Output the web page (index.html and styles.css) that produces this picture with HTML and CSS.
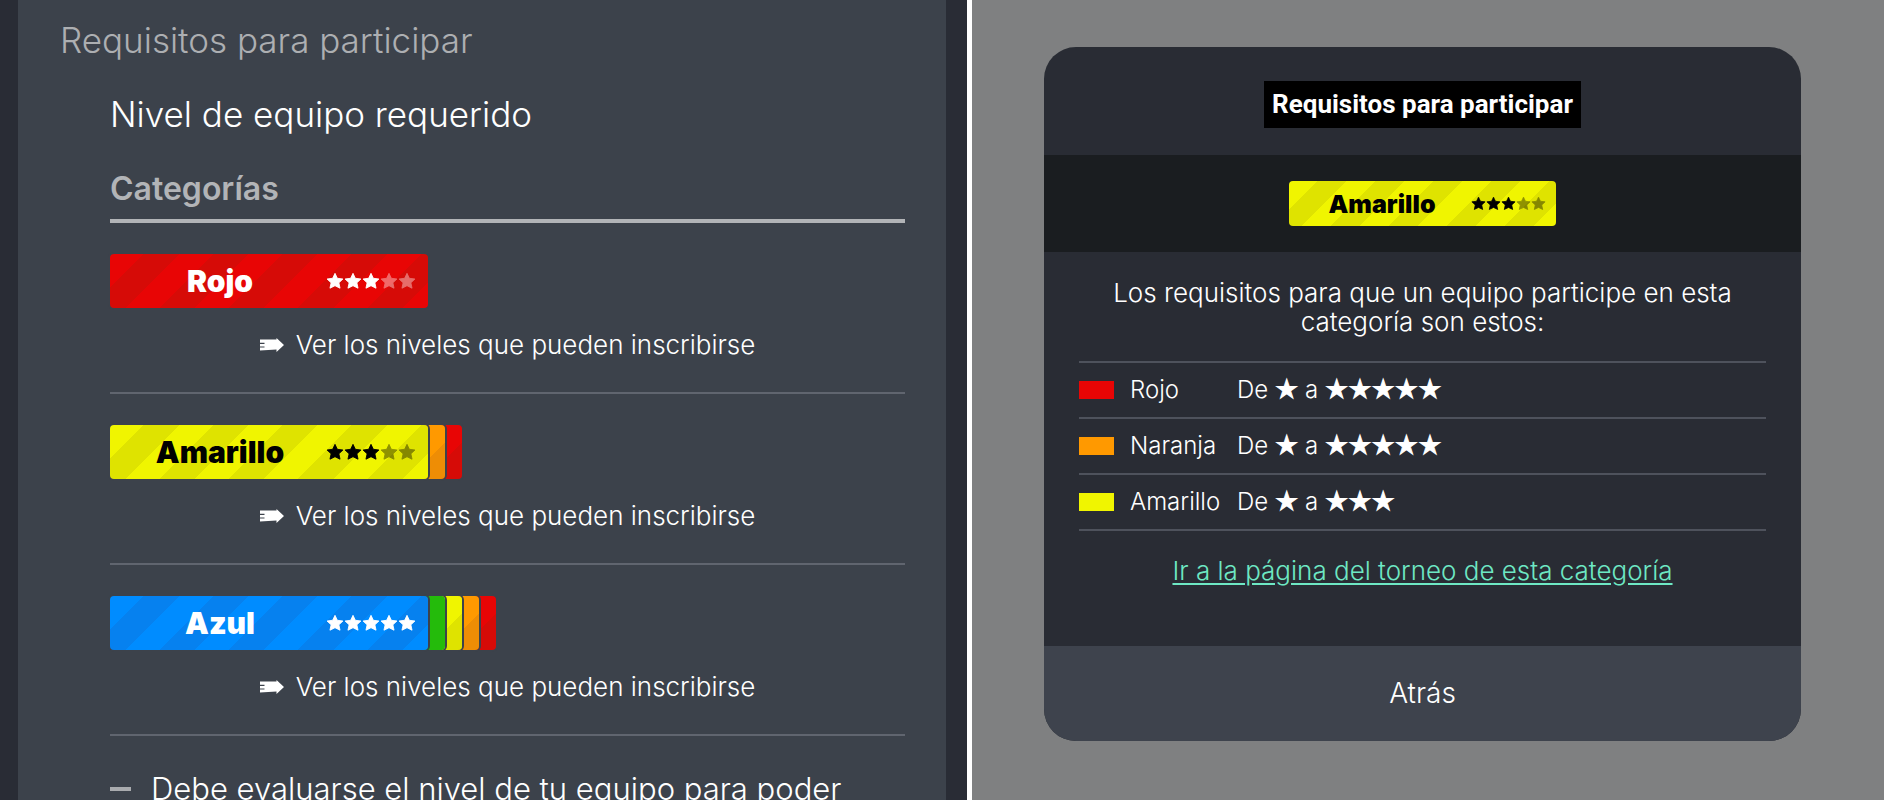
FILE: index.html
```html
<!DOCTYPE html>
<html lang="es">

<head>
    <meta charset="UTF-8">
    <meta name="viewport" content="width=device-width, initial-scale=1.0">
    <title>Requisitos para participar</title>
    <link rel="stylesheet" href="styles.css">
</head>

<body>
    <!-- shared icons -->
    <svg class="defs" aria-hidden="true">
        <symbol id="star" viewBox="0 0 20 20">
            <path d="M10 1.5 L12.6 7 L18.8 7.8 L14.3 12 L15.6 18 L10 15.2 L4.4 18 L5.7 12 L1.2 7.8 L7.4 7 Z" fill="currentColor" stroke="currentColor" stroke-linejoin="round" />
        </symbol>
        <symbol id="arrow" viewBox="0 0 24 14">
            <path d="M0 1.5 L16.5 1.5 L16.5 0 L24 7 L16.5 14 L16.5 11.5 L0 12.5 L0 9.6 L4.5 9.6 L4.5 8.4 L0 8.4 L0 6 L4.5 6 L4.5 4.8 L0 4.8 Z" fill="currentColor" />
        </symbol>
    </svg>

    <div class="page">
        <main class="screen">
            <section class="panel">
                <h1>Requisitos para participar</h1>
                <div class="content">
                    <h2>Nivel de equipo requerido</h2>
                    <h3>Categorías</h3>
                    <ul class="categories">
                        <li>
                            <div class="stack">
                                <div class="badge red">
                                    <span class="name">Rojo</span>
                                    <span class="stars"><svg><use href="#star" /></svg><svg><use href="#star" /></svg><svg><use href="#star" /></svg><svg class="off"><use href="#star" /></svg><svg class="off"><use href="#star" /></svg></span>
                                </div>
                            </div>
                            <a class="more" href="#rojo"><svg><use href="#arrow" /></svg>Ver los niveles que pueden inscribirse</a>
                        </li>
                        <li>
                            <div class="stack">
                                <div class="badge yellow">
                                    <span class="name">Amarillo</span>
                                    <span class="stars"><svg><use href="#star" /></svg><svg><use href="#star" /></svg><svg><use href="#star" /></svg><svg class="off"><use href="#star" /></svg><svg class="off"><use href="#star" /></svg></span>
                                </div>
                                <span class="tab orange"></span>
                                <span class="tab red"></span>
                            </div>
                            <a class="more" href="#amarillo"><svg><use href="#arrow" /></svg>Ver los niveles que pueden inscribirse</a>
                        </li>
                        <li>
                            <div class="stack">
                                <div class="badge blue">
                                    <span class="name">Azul</span>
                                    <span class="stars"><svg><use href="#star" /></svg><svg><use href="#star" /></svg><svg><use href="#star" /></svg><svg><use href="#star" /></svg><svg><use href="#star" /></svg></span>
                                </div>
                                <span class="tab green"></span>
                                <span class="tab yellow"></span>
                                <span class="tab orange"></span>
                                <span class="tab red"></span>
                            </div>
                            <a class="more" href="#azul"><svg><use href="#arrow" /></svg>Ver los niveles que pueden inscribirse</a>
                        </li>
                    </ul>
                    <p class="note">Debe evaluarse el nivel de tu equipo para poder</p>
                </div>
            </section>
        </main>

        <aside class="overlay">
            <div class="modal" role="dialog" aria-labelledby="modal-title">
                <header>
                    <h2 id="modal-title">Requisitos para participar</h2>
                </header>
                <div class="current">
                    <div class="badge small yellow">
                        <span class="name">Amarillo</span>
                        <span class="stars"><svg><use href="#star" /></svg><svg><use href="#star" /></svg><svg><use href="#star" /></svg><svg class="off"><use href="#star" /></svg><svg class="off"><use href="#star" /></svg></span>
                    </div>
                </div>
                <div class="body">
                    <p>Los requisitos para que un equipo participe en esta categoría son estos:</p>
                    <table>
                        <tr>
                            <td class="color"><span class="swatch red"></span></td>
                            <td class="label">Rojo</td>
                            <td>De <b>★</b> a <b>★★★★★</b></td>
                        </tr>
                        <tr>
                            <td class="color"><span class="swatch orange"></span></td>
                            <td class="label">Naranja</td>
                            <td>De <b>★</b> a <b>★★★★★</b></td>
                        </tr>
                        <tr>
                            <td class="color"><span class="swatch yellow"></span></td>
                            <td class="label">Amarillo</td>
                            <td>De <b>★</b> a <b>★★★</b></td>
                        </tr>
                    </table>
                    <a class="link" href="#torneo">Ir a la página del torneo de esta categoría</a>
                </div>
                <button class="back" type="button">Atrás</button>
            </div>
        </aside>
    </div>
</body>

</html>
```
FILE: styles.css
```css
* {
    margin: 0;
    padding: 0;
    box-sizing: border-box;
}

body {
    height: 100vh;
    overflow: hidden;
    background: #ffffff;
    color: #ffffff;
    font-family: Inter, "Noto Sans", sans-serif;
    font-weight: 300;
}

.defs {
    display: none;
}

.page {
    display: grid;
    grid-template-columns: 967fr 912fr;
    gap: 5px;
    height: 100vh;
}

/* left screen */
.screen {
    background: #292c35;
    padding: 0 21px 0 18px;
    overflow: hidden;
}

.panel {
    background: #3c424b;
    min-height: 100%;
    padding: 18px 41px 0 42px;
}

.panel h1,
.panel h2 {
    font-size: 35px;
    line-height: 44px;
    font-weight: 300;
}

.panel h1 {
    color: #adafb2;
}

.content {
    padding: 30px 0 0 50px;
}

.panel h3 {
    font-size: 32px;
    line-height: 40px;
    font-weight: 600;
    color: #b2b4b7;
    margin-top: 33px;
    padding-bottom: 10px;
    border-bottom: 4px solid #b2b4b7;
}

.categories {
    list-style: none;
}

.categories li {
    padding: 31px 0;
    border-bottom: 2px solid #60656f;
}

.stack {
    display: flex;
}

/* level colours */
.red {
    --base: #e80505;
    --stripe: #d60b07;
    --ink: #ffffff;
}

.orange {
    --base: #ff9900;
    --stripe: #ee8d05;
}

.yellow {
    --base: #f0f500;
    --stripe: #dfe300;
    --ink: #000000;
}

.green {
    --base: #24bb0b;
    --stripe: #24bb0b;
}

.blue {
    --base: #008cff;
    --stripe: #0681ef;
    --ink: #ffffff;
}

.badge {
    display: flex;
    align-items: center;
    width: 318px;
    height: 54px;
    padding: 0 12px 0 32px;
    border-radius: 4px;
    color: var(--ink);
    background: repeating-linear-gradient(135deg, var(--base) 0 24px, var(--stripe) 24px 49px);
    box-shadow: 0 0 0 2px #3c424b;
    z-index: 5;
}

.badge .name {
    flex: 1;
    font-size: 30px;
    line-height: 36px;
    font-weight: 900;
    text-align: center;
    padding-right: 28px;
}

.stars {
    display: flex;
}

.stars svg {
    width: 18px;
    height: 18px;
}

.stars .off {
    opacity: 0.4;
}

/* each tab slides under the one on its left */
.tab {
    width: 22px;
    height: 54px;
    margin-left: -5px;
    border-radius: 4px;
    background: linear-gradient(135deg, var(--base) 28px, var(--stripe) 28px);
    box-shadow: 0 0 0 2px #3c424b;
    z-index: 1;
}

.tab:nth-child(2) {
    z-index: 4;
}

.tab:nth-child(3) {
    z-index: 3;
}

.tab:nth-child(4) {
    z-index: 2;
}

.more {
    display: flex;
    align-items: center;
    justify-content: center;
    gap: 12px;
    margin-top: 21px;
    font-size: 26px;
    line-height: 32px;
    color: #ffffff;
    text-decoration: none;
}

.more svg {
    width: 24px;
    height: 14px;
}

.note {
    display: flex;
    align-items: center;
    gap: 20px;
    margin-top: 33px;
    font-size: 31px;
    line-height: 40px;
    white-space: nowrap;
}

.note::before {
    content: "";
    width: 21px;
    height: 4px;
    background: #a9abae;
}

/* dimmed screen with the dialog */
.overlay {
    background: #7f8081;
    padding: 47px 83px 0 72px;
}

.modal {
    background: #292c34;
    border-radius: 32px;
    overflow: hidden;
}

.modal header {
    display: flex;
    justify-content: center;
    padding: 34px 0 27px;
}

.modal h2 {
    background: #000000;
    padding: 0 8px;
    font-family: Roboto, sans-serif;
    font-size: 26px;
    line-height: 47px;
    font-weight: 700;
}

.current {
    display: flex;
    justify-content: center;
    padding: 26px 0;
    background: #1a1d20;
}

.badge.small {
    width: 267px;
    height: 45px;
    padding: 0 10px 0 26px;
    background: repeating-linear-gradient(135deg, var(--base) 0 20px, var(--stripe) 20px 41px);
    box-shadow: none;
}

.badge.small .name {
    font-size: 25px;
    line-height: 30px;
    padding-right: 22px;
}

.badge.small svg {
    width: 15px;
    height: 15px;
}

.body {
    padding: 26px 35px 59px;
    text-align: center;
}

.body p {
    font-size: 26px;
    line-height: 29px;
}

.body table {
    width: 100%;
    margin: 25px 0 24px;
    border-collapse: collapse;
    text-align: left;
}

.body td {
    height: 56px;
    border-top: 2px solid #4e525c;
    border-bottom: 2px solid #4e525c;
    font-size: 24px;
    line-height: 32px;
}

.body b {
    font-family: "DejaVu Sans", sans-serif;
    font-size: 26px;
    line-height: 24px;
    font-weight: 400;
    -webkit-text-stroke: 1px #ffffff;
}

.body .color {
    width: 51px;
}

.body .label {
    width: 107px;
}

.swatch {
    display: block;
    width: 35px;
    height: 18px;
    background: var(--base);
}

.link {
    font-size: 26px;
    line-height: 32px;
    color: #6ee8c4;
    text-underline-offset: 3px;
}

.back {
    display: block;
    width: 100%;
    padding: 31px 0 32px;
    border: none;
    background: #3e434d;
    color: #ffffff;
    font-family: inherit;
    font-size: 28px;
    line-height: 32px;
    font-weight: 300;
    cursor: pointer;
}
```
